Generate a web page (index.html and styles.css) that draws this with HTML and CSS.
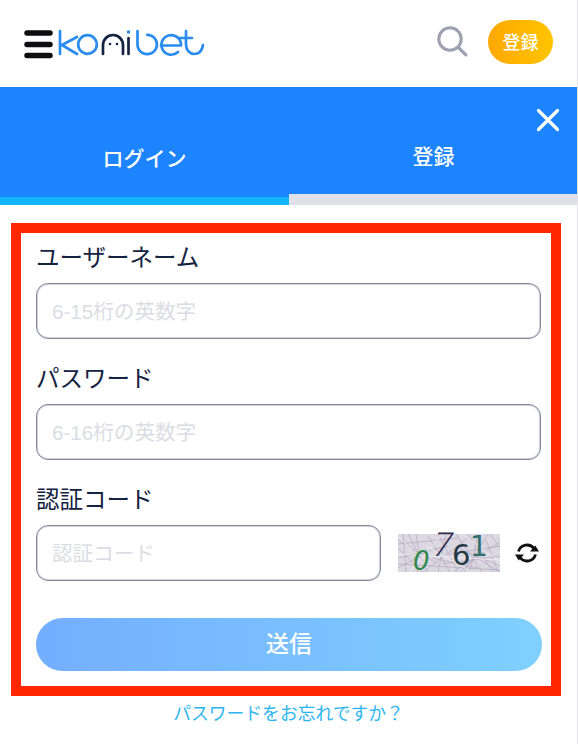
FILE: index.html
```html
<!DOCTYPE html>
<html lang="ja">
<head>
<meta charset="utf-8">
<title>konibet</title>
<link rel="stylesheet" href="styles.css">
</head>
<body>
<header class="topbar">
  <svg class="logo" width="185" height="40" viewBox="23 25 185 40" aria-label="konibet">
    <g fill="none" stroke="#0d0d12" stroke-width="5.500" stroke-linecap="round">
      <path d="M27 33H50M27 44.500H50M27 55.500H50"/>
    </g>
    <g fill="none" stroke="#2b8cf0" stroke-width="2.700" stroke-linecap="round" stroke-linejoin="round">
      <path d="M60 31V54M77 37L62 45L77 54"/>
      <circle cx="87.500" cy="44.500" r="9.300"/>
      <path d="M137.500 31V44.500a9.700 9.700 0 1 0 9.700-9.700"/>
      <path d="M161 45.500H181M181 44.500a9.800 9.800 0 1 0-3 7.500"/>
      <path d="M186 31V44c0 6.500 4 10 8 10c4.500 0 8-3 9-9M178 38H192"/>
    </g>
    <g fill="none" stroke="#14233f" stroke-width="2.700" stroke-linecap="round">
      <path d="M103 54V45a10 10 0 0 1 20 0V54"/>
      <path d="M128.500 38V54"/>
    </g>
    <circle cx="110" cy="44" r="1.300" fill="#14233f"/>
    <circle cx="117" cy="44" r="1.300" fill="#14233f"/>
    <circle cx="128.500" cy="32" r="1.800" fill="#2b8cf0"/>
  </svg>
  <div class="actions">
    <svg class="search" width="31" height="31" viewBox="0 0 31 31">
      <circle cx="13" cy="13" r="11.200" fill="none" stroke="#9ea2b0" stroke-width="3"/>
      <path d="M21.500 21.500L28.800 28.800" stroke="#9ea2b0" stroke-width="3.200" stroke-linecap="round"/>
    </svg>
    <button class="signup">登録</button>
  </div>
</header>

<section class="tabs">
  <div class="tab tab-active"><span class="tab-label tab-label-low">ログイン</span></div>
  <div class="tab tab-idle"><span class="tab-label">登録</span></div>
  <svg class="close" width="24" height="24" viewBox="0 0 24 24">
    <path d="M2.500 2.500L21.500 21.500M21.500 2.500L2.500 21.500" stroke="#fff" stroke-width="3.200" stroke-linecap="round"/>
  </svg>
</section>

<form class="form">
  <div class="field">
    <label class="label">ユーザーネーム</label>
    <div class="input">6-15桁の英数字</div>
  </div>
  <div class="field">
    <label class="label">パスワード</label>
    <div class="input">6-16桁の英数字</div>
  </div>
  <div class="field">
    <label class="label">認証コード</label>
    <div class="code-row">
      <div class="input input-code">認証コード</div>
      <div class="captcha">
        <svg class="captcha-bg" width="102" height="38" viewBox="0 0 102 38">
          <rect width="102" height="38" fill="#dcd8e2"/>
          <g stroke="#b3a8bd" stroke-width="0.700" fill="none">
            <path d="M0 6L40 30M10 0L30 38M25 38L70 4M40 0L60 38M55 38L102 8M70 0L95 38M0 24L50 12M45 30L102 22M80 0L72 38M0 34L30 18M60 14L102 32M15 16L20 38M88 6L100 38"/>
            <path d="M0 14L24 38M5 0L8 38M18 0L22 24M30 2L52 38M48 0L40 38M58 0L84 38M66 38L90 0M76 22L102 38M92 0L102 14M0 30L102 36M0 10L60 4M34 24L80 34M52 20L102 12M84 18L62 38"/>
          </g>
          <g stroke="#eeeaf2" stroke-width="0.900" fill="none">
            <path d="M0 20L102 26M12 38L44 0M28 12L74 38M64 0L102 28M0 2L30 34"/>
          </g>
        </svg>
        <span class="digit d0">0</span>
        <span class="digit d7">7</span>
        <span class="digit d6">6</span>
        <span class="digit d1">1</span>
      </div>
      <svg class="refresh" width="26" height="24" viewBox="0 0 26 24">
        <g fill="none" stroke="#111" stroke-width="2.800">
          <path d="M4.500 10.500A8.800 8.800 0 0 1 20 7.500"/>
          <path d="M21.500 13.500A8.800 8.800 0 0 1 6 16.500"/>
        </g>
        <path d="M16 10.500H25L21.300 4.500Z" fill="#111"/>
        <path d="M10 13.500H1L4.700 19.500Z" fill="#111"/>
      </svg>
    </div>
  </div>
  <button class="submit" type="button">送信</button>
</form>

<a class="forgot">パスワードをお忘れですか？</a>
</body>
</html>
```

FILE: styles.css
```css
* { box-sizing: border-box; }
html, body { margin: 0; padding: 0; }
body {
  width: 578px;
  height: 744px;
  overflow: hidden;
  background: #fff;
  font-family: "Noto Sans CJK JP", "Noto Sans", sans-serif;
  border-right: 1px solid #e3e3e6;
}
.topbar {
  height: 87px;
  display: flex;
  align-items: flex-start;
  justify-content: space-between;
  padding: 20px 24px 0 23px;
}
.logo { display: block; margin-top: 5px; }
.actions { display: flex; align-items: center; gap: 20px; }
.search { display: block; margin-top: -1px; }
.signup {
  width: 65px;
  height: 44px;
  border: 0;
  padding: 0 0 3px;
  border-radius: 22px;
  background: linear-gradient(90deg, #ffa800, #ffc400);
  color: #fff;
  font: 500 18px "Noto Sans CJK JP", sans-serif;
}
.tabs {
  position: relative;
  display: flex;
  height: 118px;
  margin-right: -1px;
  background: #1c84ff;
}
.tab {
  flex: 1;
  display: flex;
  justify-content: center;
  color: #fff;
}
.tab-active { border-bottom: 8px solid #14b4ff; }
.tab-idle { border-bottom: 11px solid #dfe0e8; }
.tab-label {
  font-size: 21px;
  font-weight: 500;
  line-height: 30px;
  margin-top: 53px;
}
.tab-label-low { margin-top: 55px; }
.close { position: absolute; top: 21px; right: 18px; }
.form {
  margin: 18px 16px 0 11px;
  height: 473px;
  border: 10px solid #ff2600;
  padding: 6px 10px 0 15px;
  display: flex;
  flex-direction: column;
}
.field { display: flex; flex-direction: column; margin-bottom: 21px; }
.label {
  font-size: 23.500px;
  line-height: 34px;
  margin-bottom: 10px;
  color: #14233f;
}
.input {
  height: 56px;
  border: 1px solid #84889a;
  box-shadow: inset 0 0 0 1px rgba(142, 146, 162, 0.4);
  border-radius: 12px;
  padding: 0 0 2px 15px;
  display: flex;
  align-items: center;
  font-family: "Liberation Sans", "Noto Sans CJK JP", sans-serif;
  font-size: 20.600px;
  color: #dadde3;
}
.code-row { display: flex; align-items: center; }
.input-code { width: 345px; }
.captcha {
  position: relative;
  width: 102px;
  height: 38px;
  margin-left: 17px;
}
.captcha-bg { position: absolute; inset: 0; display: block; }
.digit {
  position: absolute;
  line-height: 1;
  font-family: "DejaVu Sans", sans-serif;
}
.d0 { left: 15px; top: 14px; font-size: 26px; color: #2d8a4c; font-style: italic; }
.d7 { left: 36px; top: -6px; font-size: 33px; color: #2d2a4a; font-family: "Roboto", sans-serif; font-weight: 300; transform: skewX(-14deg); }
.d6 { left: 54px; top: 7px; font-size: 29px; color: #1f3a44; }
.d1 { left: 72px; top: -1px; font-size: 28px; color: #2f6f70; font-weight: 400; }
.refresh { margin-left: 14px; display: block; }
.submit {
  width: 506px;
  height: 53px;
  flex: none;
  margin-top: 16px;
  border: 0;
  padding: 0 0 5px;
  border-radius: 27px;
  background: linear-gradient(90deg, #74aeff, #7fd0ff);
  color: #fff;
  font: 500 23px "Noto Sans CJK JP", sans-serif;
}
.forgot {
  display: block;
  text-align: center;
  margin-top: 2px;
  font-size: 17.800px;
  line-height: 28px;
  color: #2cb5f0;
}
```
